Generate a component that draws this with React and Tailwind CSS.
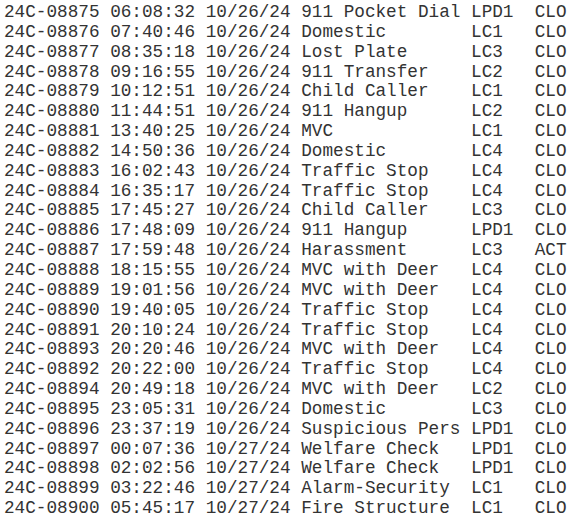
const rows = [
  ["24C-08875", "06:08:32", "10/26/24", "911 Pocket Dial", "LPD1", "CLO"],
  ["24C-08876", "07:40:46", "10/26/24", "Domestic", "LC1", "CLO"],
  ["24C-08877", "08:35:18", "10/26/24", "Lost Plate", "LC3", "CLO"],
  ["24C-08878", "09:16:55", "10/26/24", "911 Transfer", "LC2", "CLO"],
  ["24C-08879", "10:12:51", "10/26/24", "Child Caller", "LC1", "CLO"],
  ["24C-08880", "11:44:51", "10/26/24", "911 Hangup", "LC2", "CLO"],
  ["24C-08881", "13:40:25", "10/26/24", "MVC", "LC1", "CLO"],
  ["24C-08882", "14:50:36", "10/26/24", "Domestic", "LC4", "CLO"],
  ["24C-08883", "16:02:43", "10/26/24", "Traffic Stop", "LC4", "CLO"],
  ["24C-08884", "16:35:17", "10/26/24", "Traffic Stop", "LC4", "CLO"],
  ["24C-08885", "17:45:27", "10/26/24", "Child Caller", "LC3", "CLO"],
  ["24C-08886", "17:48:09", "10/26/24", "911 Hangup", "LPD1", "CLO"],
  ["24C-08887", "17:59:48", "10/26/24", "Harassment", "LC3", "ACT"],
  ["24C-08888", "18:15:55", "10/26/24", "MVC with Deer", "LC4", "CLO"],
  ["24C-08889", "19:01:56", "10/26/24", "MVC with Deer", "LC4", "CLO"],
  ["24C-08890", "19:40:05", "10/26/24", "Traffic Stop", "LC4", "CLO"],
  ["24C-08891", "20:10:24", "10/26/24", "Traffic Stop", "LC4", "CLO"],
  ["24C-08893", "20:20:46", "10/26/24", "MVC with Deer", "LC4", "CLO"],
  ["24C-08892", "20:22:00", "10/26/24", "Traffic Stop", "LC4", "CLO"],
  ["24C-08894", "20:49:18", "10/26/24", "MVC with Deer", "LC2", "CLO"],
  ["24C-08895", "23:05:31", "10/26/24", "Domestic", "LC3", "CLO"],
  ["24C-08896", "23:37:19", "10/26/24", "Suspicious Pers", "LPD1", "CLO"],
  ["24C-08897", "00:07:36", "10/27/24", "Welfare Check", "LPD1", "CLO"],
  ["24C-08898", "02:02:56", "10/27/24", "Welfare Check", "LPD1", "CLO"],
  ["24C-08899", "03:22:46", "10/27/24", "Alarm-Security", "LC1", "CLO"],
  ["24C-08900", "05:45:17", "10/27/24", "Fire Structure", "LC1", "CLO"],
];

// fixed-width columns, like the dispatch log printout
const line = ([id, time, date, type, unit, status]) =>
  `${id} ${time} ${date} ${type.padEnd(16)}${unit.padEnd(6)}${status}`;

export default function App() {
  return (
    <div className="w-[570px] h-[518px] bg-white overflow-hidden">
      <pre className="pl-[4px] pt-[3px] text-[17.7px] leading-[19.84px] text-[#333333] font-['Liberation_Mono',monospace]">
        {rows.map((r) => line(r)).join("\n")}
      </pre>
    </div>
  );
}
